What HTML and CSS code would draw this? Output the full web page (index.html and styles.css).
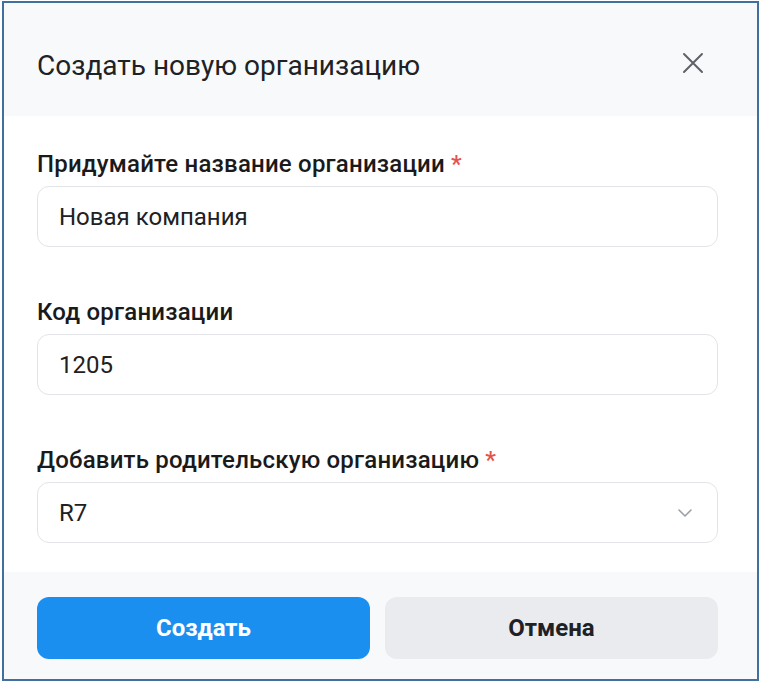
FILE: index.html
```html
<!DOCTYPE html>
<html lang="ru">
<head>
  <meta charset="UTF-8" />
  <meta name="viewport" content="width=device-width, initial-scale=1.0"/>
  <title>Создать новую организацию</title>
  <link rel="stylesheet" href="styles.css">
</head>
<body>
  <div class="modal">
    <header class="modal-header">
      <h1 class="modal-title">Создать новую организацию</h1>
      <button class="close-btn" type="button" aria-label="Закрыть">
        <svg width="22" height="22" viewBox="0 0 22 22" fill="none">
          <path d="M2 2L20 20M20 2L2 20" stroke="#5f6368" stroke-width="2" stroke-linecap="round"/>
        </svg>
      </button>
    </header>

    <div class="modal-body">
      <div class="field">
        <label class="field-label">Придумайте название организации <span class="required">*</span></label>
        <div class="input">Новая компания</div>
      </div>

      <div class="field">
        <label class="field-label">Код организации</label>
        <div class="input">1205</div>
      </div>

      <div class="field">
        <label class="field-label">Добавить родительскую организацию <span class="required">*</span></label>
        <div class="input select">
          <span>R7</span>
          <svg width="16" height="10" viewBox="0 0 16 10" fill="none">
            <path d="M2 2L8 8L14 2" stroke="#9aa0a6" stroke-width="1.6" stroke-linecap="round" stroke-linejoin="round"/>
          </svg>
        </div>
      </div>
    </div>

    <footer class="modal-footer">
      <button class="btn btn-primary" type="button">Создать</button>
      <button class="btn btn-secondary" type="button">Отмена</button>
    </footer>
  </div>
</body>
</html>
```

FILE: styles.css
```css
:root {
  --frame-color: #41709f;
  --muted-bg: #f8f9fb;
  --text-color: #202124;
  --border-color: #e2e4e8;
  --primary-color: #1a8ff0;
  --secondary-bg: #e9ebef;
  --required-color: #e5534b;
}

body {
  margin: 0;
  padding: 1px 3px 3px 2px;
  font-family: Roboto, 'Noto Sans', sans-serif;
  color: var(--text-color);
  background-color: white;
}

.modal {
  border: 2px solid var(--frame-color);
  height: 676px;
  display: flex;
  flex-direction: column;
  background-color: white;
}

.modal-header {
  background-color: var(--muted-bg);
  height: 113px;
  box-sizing: border-box;
  display: flex;
  align-items: center;
  justify-content: space-between;
  padding: 12px 53px 0 33px;
  flex-shrink: 0;
}

.modal-title {
  margin: 0;
  font-size: 28px;
  font-weight: 400;
  color: var(--text-color);
}

.close-btn {
  border: none;
  background: none;
  padding: 0;
  margin-bottom: 6px;
  display: flex;
  cursor: pointer;
}

.modal-body {
  padding: 34px 39px 29px 33px;
  display: flex;
  flex-direction: column;
  gap: 51px;
}

.field {
  display: flex;
  flex-direction: column;
  gap: 8px;
}

.field-label {
  font-size: 24px;
  font-weight: 500;
  line-height: 28px;
  letter-spacing: 0.2px;
  color: #1a1a1a;
}

.required {
  color: var(--required-color);
}

.input {
  height: 59px;
  border: 1px solid var(--border-color);
  border-radius: 12px;
  padding: 0 21px;
  display: flex;
  align-items: center;
  font-size: 24px;
  color: var(--text-color);
}

.select {
  justify-content: space-between;
  padding-right: 24px;
}

.modal-footer {
  flex: 1;
  background-color: var(--muted-bg);
  display: flex;
  gap: 15px;
  padding: 25px 39px 19px 33px;
}

.btn {
  flex: 1;
  height: 62px;
  border: none;
  border-radius: 12px;
  font-family: inherit;
  font-size: 24px;
  font-weight: 700;
  cursor: pointer;
}

.btn-primary {
  background-color: var(--primary-color);
  color: white;
}

.btn-secondary {
  background-color: var(--secondary-bg);
  color: var(--text-color);
}
```
